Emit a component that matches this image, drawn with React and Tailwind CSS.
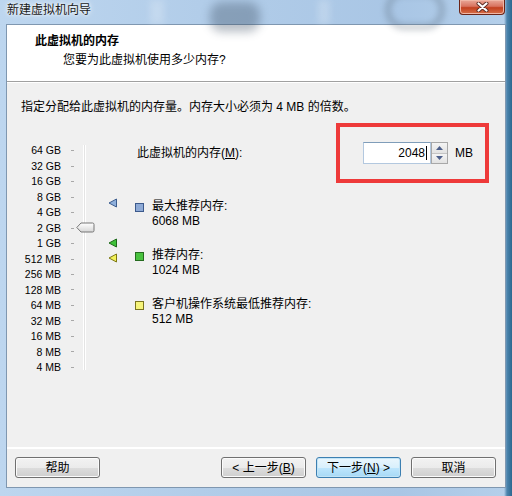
import React from 'react';

const scale = ["64 GB", "32 GB", "16 GB", "8 GB", "4 GB", "2 GB", "1 GB", "512 MB", "256 MB", "128 MB", "64 MB", "32 MB", "16 MB", "8 MB", "4 MB"];

const legend = [
    { title: "最大推荐内存:", value: "6068 MB", box: "bg-[#8eaad6] border-[#3c5a8c]" },
    { title: "推荐内存:", value: "1024 MB", box: "bg-[#49c23f] border-[#256b1f]" },
    { title: "客户机操作系统最低推荐内存:", value: "512 MB", box: "bg-[#f6f47a] border-[#7a7420]" },
];

// small left-pointing marker on the memory scale
function Marker({ fill, stroke, top }) {
    return (
        <svg className="absolute left-[101px]" style={{ top }} width="10" height="10" viewBox="0 0 10 10">
            <path d="M1 5 L8.5 1 V9 Z" fill={fill} stroke={stroke} strokeWidth="1" strokeLinejoin="round" />
        </svg>
    );
}

function Button({ children, focused }) {
    return (
        <button
            className={`w-[85px] h-[21px] rounded-[3px] border text-[12px] leading-none text-black flex items-center justify-center ${focused
                ? "border-[#3c7fb1] bg-[linear-gradient(#eaf6fd_0%,#d9f0fc_50%,#bee6fd_51%,#a7d9f5_100%)] shadow-[inset_0_0_0_1px_#c2e4f6]"
                : "border-[#707070] bg-[linear-gradient(#f2f2f2_0%,#ebebeb_50%,#dddddd_51%,#cfcfcf_100%)] shadow-[inset_0_0_0_1px_#fbfbfb]"
                }`}
        >
            {children}
        </button>
    );
}

export default function App() {
    return (
        <div className="w-[512px] h-[496px] flex flex-col overflow-hidden font-['Liberation_Sans','Noto_Sans_CJK_SC',sans-serif] text-black bg-[linear-gradient(to_right,#bdd6ef_0px,#b2cde9_200px,#a9c6e5_400px,#b4cfea_504px,#4c84ad_507px,#2c6890_512px)]">
            {/* title bar */}
            <div className="relative h-[24px] flex items-center pl-[7px] pb-[4px] shrink-0">
                <div className="absolute left-[210px] top-[2px] w-[50px] h-[30px] rounded-[12px] bg-[#3a4c60] opacity-35 blur-[5px]" />
                <div className="absolute left-[385px] top-[-10px] w-[60px] h-[40px] rounded-full border-[6px] border-[#4d5c6b] opacity-30 blur-[3px]" />
                <div className="absolute left-[150px] top-0 w-[14px] h-[24px] bg-white opacity-20 blur-[3px]" />
                <div className="absolute left-[318px] top-0 w-[12px] h-[24px] bg-white opacity-20 blur-[3px]" />
                <span className="relative text-[12px] leading-[16px] text-[#1a1a1a] [text-shadow:0_0_6px_#ffffff,0_0_3px_#ffffff]">新建虚拟机向导</span>
                <div className="absolute right-[7px] top-0 w-[46px] h-[15px] rounded-b-[4px] border border-t-0 border-[#6b2417] bg-[linear-gradient(#e9a898_0%,#d8735f_45%,#c2401f_55%,#d6704a_100%)] shadow-[inset_0_0_0_1px_#f0b7a6] flex items-center justify-center">
                    <svg width="13" height="10" viewBox="0 0 13 10">
                        <path d="M2.5 1.5 L10.5 8.5 M10.5 1.5 L2.5 8.5" stroke="#5a2a22" strokeWidth="4" strokeLinecap="round" />
                        <path d="M2.5 1.5 L10.5 8.5 M10.5 1.5 L2.5 8.5" stroke="#ffffff" strokeWidth="2.2" strokeLinecap="round" />
                    </svg>
                </div>
            </div>

            {/* client area */}
            <div className="mx-[6px] flex-1 flex flex-col border border-[#7f97b0] bg-[#f0f0f0]">
                {/* header */}
                <div className="h-[57px] shrink-0 bg-white border-b border-[#a0a0a0] pt-[8px] text-[12px] leading-[16px]">
                    <div className="pl-[28px] font-bold">此虚拟机的内存</div>
                    <div className="pl-[56px] mt-[3px]">您要为此虚拟机使用多少内存?</div>
                </div>

                {/* body */}
                <div className="flex-1 border-t border-white pt-[16px] text-[12px]">
                    <div className="pl-[14px] leading-[16px]">指定分配给此虚拟机的内存量。内存大小必须为 4 MB 的倍数。</div>

                    <div className="mt-[8px] flex">
                        {/* memory scale */}
                        <div className="relative w-[128px] shrink-0 flex">
                            <div className="pt-[20px] flex flex-col">
                                {scale.map((s) => (
                                    <div key={s} className="h-[15.48px] flex items-center">
                                        <span className="w-[54px] text-right text-[10.5px] leading-none">{s}</span>
                                        <span className="ml-[10px] w-[3px] h-px bg-[#a8a8a8]" />
                                    </div>
                                ))}
                            </div>
                            <div className="ml-[9px] mt-[22px] w-[3px] h-[225px] border-l border-[#a0a0a0] border-r border-white bg-[#e4e4e4]" />
                            <svg className="absolute left-[69px] top-[99px]" width="19" height="11" viewBox="0 0 19 11">
                                <defs>
                                    <linearGradient id="thumb" x1="0" y1="0" x2="0" y2="1">
                                        <stop offset="0" stopColor="#ffffff" />
                                        <stop offset="1" stopColor="#d6d6d6" />
                                    </linearGradient>
                                </defs>
                                <path d="M0.8 5.5 L5 1 H16.5 Q18 1 18 2.5 V8.5 Q18 10 16.5 10 H5 Z" fill="url(#thumb)" stroke="#777777" strokeWidth="1" />
                            </svg>
                            <Marker fill="#8fb0dc" stroke="#3d5d8e" top={75} />
                            <Marker fill="#3fc23a" stroke="#1f6a1b" top={115} />
                            <Marker fill="#f3f25a" stroke="#7c7714" top={130} />
                        </div>

                        {/* value and legend */}
                        <div className="flex-1 pr-[16px] flex flex-col">
                            <div className="h-[60px] flex items-center justify-between">
                                <span className="pl-[2px] leading-[16px]">此虚拟机的内存(<span className="underline">M</span>):</span>
                                <div className="w-[153px] h-[60px] border-4 border-[#ee3a3a] flex items-center justify-end pr-[12px]">
                                    <div className="w-[68px] h-[22px] bg-white border border-[#b3c8df] border-t-[#7f9db9] flex items-center justify-end pr-[3px]">
                                        <span className="leading-none">2048</span>
                                        <span className="ml-px w-px h-[14px] bg-black" />
                                    </div>
                                    <div className="w-[17px] h-[22px] flex flex-col border border-[#a8a8a8] bg-white">
                                        <div className="flex-1 flex items-center justify-center border-b border-[#c4c4c4] bg-[linear-gradient(#f4f4f4,#e2e2e2)]">
                                            <svg width="7" height="4" viewBox="0 0 7 4"><path d="M0 4 L3.5 0 L7 4 Z" fill="#4d5f8a" /></svg>
                                        </div>
                                        <div className="flex-1 flex items-center justify-center bg-[linear-gradient(#f4f4f4,#e2e2e2)]">
                                            <svg width="7" height="4" viewBox="0 0 7 4"><path d="M0 0 L7 0 L3.5 4 Z" fill="#4d5f8a" /></svg>
                                        </div>
                                    </div>
                                    <span className="ml-[7px] leading-none">MB</span>
                                </div>
                            </div>

                            <div className="mt-[16px] flex flex-col gap-[19px]">
                                {legend.map((item) => (
                                    <div key={item.title} className="flex items-start">
                                        <span className={`mt-[4px] w-[9px] h-[9px] border shrink-0 ${item.box}`} />
                                        <div className="ml-[8px] leading-[15px]">
                                            <div>{item.title}</div>
                                            <div>{item.value}</div>
                                        </div>
                                    </div>
                                ))}
                            </div>
                        </div>
                    </div>
                </div>

                {/* footer */}
                <div className="h-[2px] shrink-0 border-t border-[#a0a0a0] border-b border-white" />
                <div className="h-[38px] shrink-0 flex items-start pt-[8px] pl-[8px] pr-[9px]">
                    <Button>帮助</Button>
                    <div className="flex-1" />
                    <div className="flex gap-[10px]">
                        <Button>&lt; 上一步(<span className="underline">B</span>)</Button>
                        <Button focused>下一步(<span className="underline">N</span>) &gt;</Button>
                        <Button>取消</Button>
                    </div>
                </div>
            </div>
            <div className="h-[8px] shrink-0" />
        </div>
    );
}
